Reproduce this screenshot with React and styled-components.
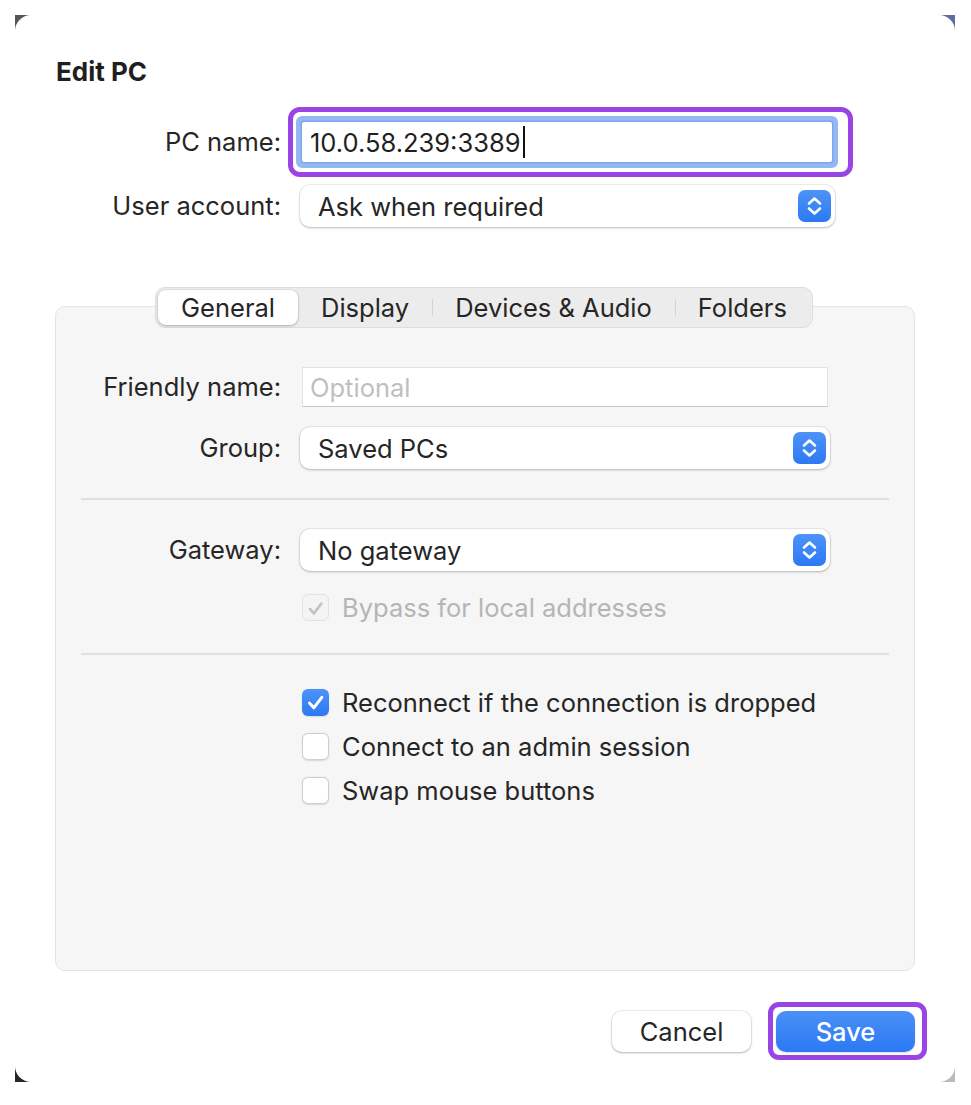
import styled, { createGlobalStyle } from "styled-components";

const GlobalStyle = createGlobalStyle`
  html, body {
    margin: 0;
    padding: 0;
    background: #ffffff;
  }
  body {
    font-family: Inter, "Liberation Sans", Arial, sans-serif;
    color: #262626;
  }
`;

const fontSize = "25.5px";

const Stepper = () => (
  <StepperBox>
    <svg width="33" height="32" viewBox="0 0 33 32" fill="none">
      <path d="M11 13.5 L16.5 8.5 L22 13.5" stroke="#fff" strokeWidth="2.6" strokeLinecap="round" strokeLinejoin="round" />
      <path d="M11 18.5 L16.5 23.5 L22 18.5" stroke="#fff" strokeWidth="2.6" strokeLinecap="round" strokeLinejoin="round" />
    </svg>
  </StepperBox>
);

const Check = ({ checked, disabled, children }) => (
  <CheckRow>
    <Box checked={checked} disabled={disabled}>
      {checked && (
        <svg width="27" height="27" viewBox="0 0 27 27" fill="none">
          <path d="M7.5 14 L11.8 18.8 L19.8 8.3" stroke={disabled ? "#c4c4c4" : "#fff"} strokeWidth="3" strokeLinecap="round" strokeLinejoin="round" />
        </svg>
      )}
    </Box>
    <CheckLabel disabled={disabled}>{children}</CheckLabel>
  </CheckRow>
);

const Select = ({ value }) => (
  <SelectBox>
    <span>{value}</span>
    <Stepper />
  </SelectBox>
);

const App = () => {
  const tabs = ["General", "Display", "Devices & Audio", "Folders"];
  return (
    <>
      <GlobalStyle />
      <Desktop>
        <Dialog>
          <Title>Edit PC</Title>

          <Form cols="226px 535px" top="34px">
            <Label>PC name:</Label>
            <Highlight>
              <FocusField>
                10.0.58.239:3389
                <Caret />
              </FocusField>
            </Highlight>
            <Label>User account:</Label>
            <Select value="Ask when required" />
          </Form>

          <TabArea>
            <Segmented>
              {tabs.map((t, i) => (
                <Segment key={t} active={i === 0} divider={i > 1}>
                  {t}
                </Segment>
              ))}
            </Segmented>
            <Panel>
              <Form cols="225px 530px" rowGap="20px">
                <Label>Friendly name:</Label>
                <TextField>
                  <Placeholder>Optional</Placeholder>
                </TextField>
                <Label>Group:</Label>
                <Select value="Saved PCs" />
              </Form>

              <Divider />

              <Form cols="225px 530px" rowGap="23px">
                <Label>Gateway:</Label>
                <Select value="No gateway" />
                <span />
                <Check checked disabled>Bypass for local addresses</Check>
              </Form>

              <Divider top="32px" bottom="34px" />

              <Form cols="225px 530px" rowGap="17px">
                <span />
                <Check checked>Reconnect if the connection is dropped</Check>
                <span />
                <Check>Connect to an admin session</Check>
                <span />
                <Check>Swap mouse buttons</Check>
              </Form>
            </Panel>
          </TabArea>

          <Footer>
            <Button>Cancel</Button>
            <SaveHighlight>
              <Button primary>Save</Button>
            </SaveHighlight>
          </Footer>
        </Dialog>
      </Desktop>
    </>
  );
};

export default App;

const Desktop = styled.div`
  margin: 15px 16px 23px 15px;
  height: 1067px;
  background:
    linear-gradient(to right, #565656, #5d6d9f) top / 100% 50% no-repeat,
    linear-gradient(to right, #262626, #bcbcbc) bottom / 100% 50% no-repeat;
`;

const Dialog = styled.div`
  height: 100%;
  box-sizing: border-box;
  background: #ffffff;
  border-radius: 16px;
  padding: 41px 40px 30px 40px;
  display: flex;
  flex-direction: column;
`;

const Title = styled.h1`
  margin: 0 0 0 1px;
  font-size: 26px;
  line-height: 32px;
  font-weight: 700;
  color: #1f1f1f;
`;

const Form = styled.div`
  display: grid;
  grid-template-columns: ${(p) => p.cols};
  column-gap: 19px;
  row-gap: ${(p) => p.rowGap || "23px"};
  align-items: center;
  margin-top: ${(p) => p.top || "0"};
`;

const Label = styled.div`
  text-align: right;
  font-size: ${fontSize};
  line-height: 30px;
  color: #262626;
  white-space: nowrap;
`;

const Highlight = styled.div`
  position: relative;
  padding-left: 2px;
  &::after {
    content: "";
    position: absolute;
    top: -15px;
    left: -12px;
    right: -18px;
    bottom: -15px;
    border: 5px solid #9a44e6;
    border-radius: 12px;
    pointer-events: none;
  }
`;

const FocusField = styled.div`
  height: 40px;
  box-sizing: border-box;
  background: #ffffff;
  display: flex;
  align-items: center;
  padding-left: 8px;
  font-size: ${fontSize};
  color: #1f1f1f;
  margin-right: 3px;
  box-shadow: 0 0 0 1.5px #7fa6ea, 0 0 0 6px #94b8f4;
  border-radius: 2px;
`;

const Caret = styled.span`
  display: inline-block;
  width: 2px;
  height: 32px;
  margin-left: 2px;
  background: #111;
`;

const SelectBox = styled.div`
  height: 42px;
  box-sizing: border-box;
  background: #ffffff;
  border-radius: 10px;
  box-shadow: 0 0 0 1px rgba(0, 0, 0, 0.06), 0 1px 2.5px rgba(0, 0, 0, 0.22);
  display: flex;
  align-items: center;
  justify-content: space-between;
  padding: 0 4px 0 18px;
  font-size: ${fontSize};
  color: #262626;
`;

const StepperBox = styled.div`
  width: 33px;
  height: 32px;
  border-radius: 7px;
  background: linear-gradient(#4d93f8, #2c79f4);
  display: flex;
`;

const TabArea = styled.div`
  margin-top: 60px;
  flex: 1;
  display: flex;
  flex-direction: column;
  align-items: center;
`;

const Segmented = styled.div`
  position: relative;
  z-index: 1;
  display: flex;
  align-items: center;
  height: 41px;
  box-sizing: border-box;
  padding: 2px;
  margin-bottom: -22px;
  background: #ececec;
  border: 1px solid #dedede;
  border-radius: 10px;
  margin-right: 2px;
`;

const Segment = styled.div`
  position: relative;
  height: 100%;
  display: flex;
  align-items: center;
  padding: 0 23px;
  font-size: ${fontSize};
  color: #262626;
  border-radius: 8px;
  background: ${(p) => (p.active ? "#ffffff" : "transparent")};
  box-shadow: ${(p) =>
    p.active ? "0 0 0 0.5px rgba(0,0,0,0.08), 0 1px 2.5px rgba(0,0,0,0.25)" : "none"};
  &::before {
    content: "";
    display: ${(p) => (p.divider ? "block" : "none")};
    position: absolute;
    left: 0;
    top: 9px;
    bottom: 9px;
    width: 1px;
    background: #d3d3d3;
  }
`;

const Panel = styled.div`
  align-self: stretch;
  flex: 1;
  background: #f6f6f6;
  border: 1px solid #e4e4e4;
  border-radius: 10px;
  padding-top: 60px;
`;

const TextField = styled.div`
  height: 40px;
  box-sizing: border-box;
  margin-left: 2px;
  margin-right: 2px;
  background: #ffffff;
  border: 1px solid #e2e2e2;
  border-bottom-color: #c6c6c6;
  display: flex;
  align-items: center;
  padding-left: 7px;
  font-size: ${fontSize};
`;

const Placeholder = styled.span`
  color: #bfbfbf;
`;

const Divider = styled.div`
  height: 2px;
  background: #e0e0e0;
  margin: ${(p) => p.top || "29px"} 25px ${(p) => p.bottom || "29px"} 25px;
`;

const CheckRow = styled.div`
  display: flex;
  align-items: center;
  gap: 13px;
  height: 27px;
  margin-left: 2px;
`;

const Box = styled.div`
  width: 27px;
  height: 27px;
  flex-shrink: 0;
  box-sizing: border-box;
  border-radius: 6px;
  display: flex;
  background: ${(p) =>
    p.checked && !p.disabled ? "linear-gradient(#4d93f8, #2c79f4)" : p.disabled ? "#f4f4f4" : "#ffffff"};
  border: ${(p) =>
    p.checked && !p.disabled ? "none" : p.disabled ? "1px solid #e2e2e2" : "1px solid #cfcfcf"};
  box-shadow: ${(p) => (p.disabled ? "none" : "0 0.5px 1.5px rgba(0,0,0,0.12)")};
`;

const CheckLabel = styled.span`
  font-size: ${fontSize};
  line-height: 27px;
  color: ${(p) => (p.disabled ? "#b5b5b5" : "#262626")};
  white-space: nowrap;
`;

const Footer = styled.div`
  margin-top: 40px;
  display: flex;
  justify-content: flex-end;
  gap: 25px;
`;

const SaveHighlight = styled.div`
  position: relative;
  &::after {
    content: "";
    position: absolute;
    top: -9px;
    left: -8px;
    right: -12px;
    bottom: -8px;
    border: 5px solid #9a44e6;
    border-radius: 11px;
    pointer-events: none;
  }
`;

const Button = styled.button`
  width: 139px;
  height: 41px;
  border: none;
  border-radius: 10px;
  font-family: inherit;
  font-size: ${fontSize};
  font-weight: ${(p) => (p.primary ? 500 : 400)};
  color: ${(p) => (p.primary ? "#ffffff" : "#262626")};
  background: ${(p) => (p.primary ? "linear-gradient(#4a90f8, #2c79f4)" : "#ffffff")};
  box-shadow: ${(p) =>
    p.primary
      ? "0 1px 2px rgba(0,0,0,0.15)"
      : "0 0 0 1px rgba(0,0,0,0.06), 0 1px 2.5px rgba(0,0,0,0.25)"};
  padding: 0;
`;
